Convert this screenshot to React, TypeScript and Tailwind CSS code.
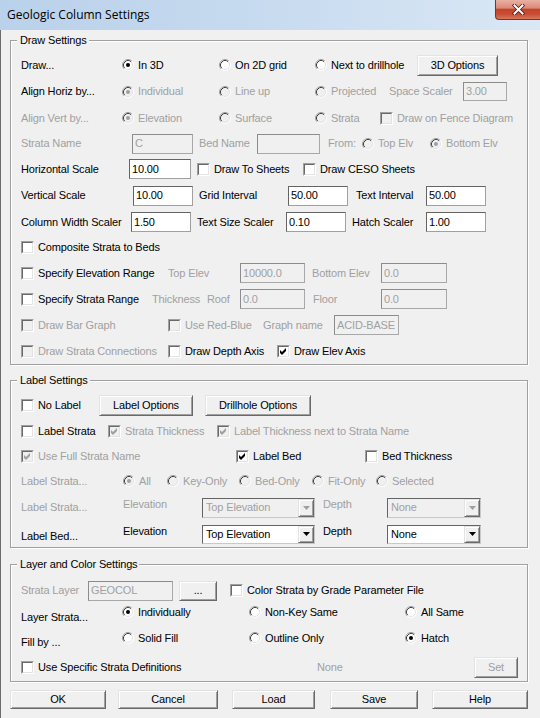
import React from 'react';

const DIS = 'text-[#a0a0a0]';

type P = { text?: string; dis?: boolean; checked?: boolean; cls?: string; value?: string };

function Label({ text, dis, cls = '' }: P) {
  return <span className={`shrink-0 whitespace-nowrap ${dis ? DIS : 'text-black'} ${cls}`}>{text}</span>;
}

function RadioGlyph({ checked, dis }: P) {
  return (
    <svg width="12" height="12" viewBox="0 0 12 12" className="shrink-0">
      <circle cx="6" cy="6" r="5.2" fill={dis ? '#f0f0f0' : '#ffffff'} />
      <path d="M2.11 9.89 A5.5 5.5 0 0 1 9.89 2.11" stroke="#a0a0a0" strokeWidth="1" fill="none" />
      <path d="M2.82 9.18 A4.5 4.5 0 0 1 9.18 2.82" stroke="#404040" strokeWidth="1" fill="none" />
      <path d="M9.89 2.11 A5.5 5.5 0 0 1 2.11 9.89" stroke="#ffffff" strokeWidth="1" fill="none" />
      <path d="M9.18 2.82 A4.5 4.5 0 0 1 2.82 9.18" stroke="#e3e3e3" strokeWidth="1" fill="none" />
      {checked && <circle cx="6" cy="6" r="2" fill={dis ? '#a0a0a0' : '#000000'} />}
    </svg>
  );
}

function Radio({ text, checked, dis, cls = '' }: P) {
  return (
    <div className={`flex items-center shrink-0 ${cls}`}>
      <RadioGlyph checked={checked} dis={dis} />
      <span className={`ml-[4px] whitespace-nowrap ${dis ? DIS : 'text-black'}`}>{text}</span>
    </div>
  );
}

function CheckGlyph({ checked, dis }: P) {
  return (
    <div className="w-[13px] h-[13px] shrink-0 border border-t-[#a0a0a0] border-l-[#a0a0a0] border-r-white border-b-white">
      <div
        className={`w-full h-full border border-t-[#696969] border-l-[#696969] border-r-[#e3e3e3] border-b-[#e3e3e3] flex items-center justify-center ${
          dis ? 'bg-[#f0f0f0]' : 'bg-white'
        }`}
      >
        {checked && (
          <svg width="7" height="7" viewBox="0 0 7 7">
            <path d="M0 2 L2 4 L6 0 L6 3 L2 7 L0 5 Z" fill={dis ? '#a0a0a0' : '#000000'} />
          </svg>
        )}
      </div>
    </div>
  );
}

function Check({ text, checked, dis, cls = '' }: P) {
  return (
    <div className={`flex items-center shrink-0 ${cls}`}>
      <CheckGlyph checked={checked} dis={dis} />
      <span className={`ml-[4px] whitespace-nowrap ${dis ? DIS : 'text-black'}`}>{text}</span>
    </div>
  );
}

function TextBox({ value, dis, cls = '' }: P) {
  return (
    <div
      className={`shrink-0 flex items-center pl-[2px] overflow-hidden whitespace-nowrap border ${
        dis
          ? 'bg-[#f0f0f0] text-[#a0a0a0] border-[#a8a8a8] border-t-[#8c8c8c] border-l-[#8c8c8c]'
          : 'bg-white text-black border-[#a0a0a0] border-t-[#646464] border-l-[#646464]'
      } ${cls}`}
    >
      {value}
    </div>
  );
}

function Btn({ text, dis, cls = '' }: P) {
  return (
    <div
      className={`shrink-0 flex items-center justify-center whitespace-nowrap bg-[#f0f0f0] border border-t-[#e3e3e3] border-l-[#e3e3e3] border-r-[#696969] border-b-[#696969] shadow-[inset_1px_1px_0_#ffffff,inset_-1px_-1px_0_#a0a0a0] ${
        dis ? DIS : 'text-black'
      } ${cls}`}
    >
      {text}
    </div>
  );
}

function Combo({ value, dis, cls = '' }: P) {
  return (
    <div
      className={`shrink-0 flex border border-t-[#646464] border-l-[#646464] border-r-[#c8c8c8] border-b-[#c8c8c8] ${
        dis ? 'bg-[#f0f0f0]' : 'bg-white'
      } ${cls}`}
    >
      <div className={`flex-1 flex items-center pl-[3px] whitespace-nowrap ${dis ? DIS : 'text-black'}`}>{value}</div>
      <div className="w-[16px] h-full flex items-center justify-center bg-[#f0f0f0] border border-t-[#e3e3e3] border-l-[#e3e3e3] border-r-[#696969] border-b-[#696969] shadow-[inset_1px_1px_0_#ffffff,inset_-1px_-1px_0_#a0a0a0]">
        <svg width="7" height="4" viewBox="0 0 7 4">
          <path d="M0 0 H7 L3.5 4 Z" fill={dis ? '#a0a0a0' : '#000000'} />
        </svg>
      </div>
    </div>
  );
}

function Group({ title, children, cls = '' }: { title: string; children: React.ReactNode; cls?: string }) {
  return (
    <div className={`relative w-[518px] border border-[#a0a0a0] shadow-[inset_1px_1px_0_#ffffff,1px_1px_0_#ffffff] ${cls}`}>
      <span className="absolute left-[6px] top-[-7px] bg-[#f0f0f0] pl-[3px] pr-[2px] leading-[13px] whitespace-nowrap">{title}</span>
      {children}
    </div>
  );
}

function Row({ cls = '', children }: { cls?: string; children: React.ReactNode }) {
  return <div className={`flex items-center pl-[10px] ${cls}`}>{children}</div>;
}

export default function App() {
  return (
    <div className="w-[540px] h-[718px] flex flex-col overflow-hidden bg-[#f0f0f0] text-[11px] leading-[13px] tracking-[-0.15px] font-['Liberation_Sans',Arial,sans-serif]">
      {/* Title bar */}
      <div className="h-[30px] shrink-0 flex items-start bg-[linear-gradient(to_right,#b9d1ea,#c9dcf0_55%,#dae8f5)]">
        <span className="ml-[7px] mt-[8px] text-[12px] leading-[14px] tracking-normal text-black font-['Open_Sans',Arial,sans-serif]">
          Geologic Column Settings
        </span>
        <div className="ml-auto w-[45px] h-[20px] rounded-bl-[4px] border border-t-0 border-r-0 border-[#7a3328] bg-[linear-gradient(to_bottom,#eab0a2_0%,#dc8a78_42%,#c6432b_50%,#c84e35_75%,#d9765c_100%)] flex items-center justify-center">
          <svg width="13" height="11" viewBox="0 0 13 11">
            <path d="M2.5 1.5 L10.5 9.5 M10.5 1.5 L2.5 9.5" stroke="#4a1a12" strokeWidth="3.6" strokeLinecap="square" />
            <path d="M2.5 1.5 L10.5 9.5 M10.5 1.5 L2.5 9.5" stroke="#ffffff" strokeWidth="2" strokeLinecap="square" />
          </svg>
        </div>
      </div>

      {/* Body */}
      <div className="flex-1 flex flex-col border-l border-[#6b6b6b] pl-[9px] pt-[10px]">
        {/* Draw Settings */}
        <Group title="Draw Settings" cls="pt-[11px]">
          <Row cls="h-[26px]">
            <Label text="Draw..." cls="w-[101px]" />
            <Radio text="In 3D" checked cls="w-[97px]" />
            <Radio text="On 2D grid" cls="w-[96px]" />
            <Radio text="Next to drillhole" cls="w-[102px]" />
            <Btn text="3D Options" cls="w-[81px] h-[21px]" />
          </Row>
          <Row cls="h-[27px]">
            <Label text="Align Horiz by..." cls="w-[101px]" />
            <Radio text="Individual" checked dis cls="w-[97px]" />
            <Radio text="Line up" dis cls="w-[96px]" />
            <Radio text="Projected" dis cls="w-[74px]" />
            <Label text="Space Scaler" dis cls="w-[74px]" />
            <TextBox value="3.00" dis cls="w-[44px] h-[19px]" />
          </Row>
          <Row cls="h-[26px]">
            <Label text="Align Vert by..." dis cls="w-[101px]" />
            <Radio text="Elevation" checked dis cls="w-[97px]" />
            <Radio text="Surface" dis cls="w-[96px]" />
            <Radio text="Strata" dis cls="w-[65px]" />
            <Check text="Draw on Fence Diagram" dis />
          </Row>
          <Row cls="h-[25px]">
            <Label text="Strata Name" dis cls="w-[111px]" />
            <TextBox value="C" dis cls="w-[61px] h-[20px] mr-[6px]" />
            <Label text="Bed Name" dis cls="w-[58px]" />
            <TextBox value="" dis cls="w-[63px] h-[20px] mr-[8px]" />
            <Label text="From:" dis cls="w-[34px]" />
            <Radio text="Top Elv" dis cls="w-[68px]" />
            <Radio text="Bottom Elv" checked dis />
          </Row>
          <Row cls="h-[26px]">
            <Label text="Horizontal Scale" cls="w-[108px]" />
            <TextBox value="10.00" cls="w-[62px] h-[20px] mr-[6px]" />
            <Check text="Draw To Sheets" cls="w-[106px]" />
            <Check text="Draw CESO Sheets" />
          </Row>
          <Row cls="h-[27px]">
            <Label text="Vertical Scale" cls="w-[112px]" />
            <TextBox value="10.00" cls="w-[60px] h-[20px] mr-[6px]" />
            <Label text="Grid Interval" cls="w-[89px]" />
            <TextBox value="50.00" cls="w-[60px] h-[20px] mr-[8px]" />
            <Label text="Text Interval" cls="w-[70px]" />
            <TextBox value="50.00" cls="w-[60px] h-[20px]" />
          </Row>
          <Row cls="h-[26px]">
            <Label text="Column Width Scaler" cls="w-[110px]" />
            <TextBox value="1.50" cls="w-[60px] h-[20px] mr-[6px]" />
            <Label text="Text Size Scaler" cls="w-[89px]" />
            <TextBox value="0.10" cls="w-[60px] h-[20px] mr-[6px]" />
            <Label text="Hatch Scaler" cls="w-[74px]" />
            <TextBox value="1.00" cls="w-[60px] h-[20px]" />
          </Row>
          <Row cls="h-[25px]">
            <Check text="Composite Strata to Beds" />
          </Row>
          <Row cls="h-[26px]">
            <Check text="Specify Elevation Range" cls="w-[147px]" />
            <Label text="Top Elev" dis cls="w-[72px]" />
            <TextBox value="10000.0" dis cls="w-[65px] h-[20px] mr-[7px]" />
            <Label text="Bottom Elev" dis cls="w-[69px]" />
            <TextBox value="0.0" dis cls="w-[66px] h-[20px]" />
          </Row>
          <Row cls="h-[26px]">
            <Check text="Specify Strata Range" cls="w-[131px]" />
            <Label text="Thickness" dis cls="w-[55px]" />
            <Label text="Roof" dis cls="w-[33px]" />
            <TextBox value="0.0" dis cls="w-[65px] h-[20px] mr-[8px]" />
            <Label text="Floor" dis cls="w-[68px]" />
            <TextBox value="0.0" dis cls="w-[66px] h-[20px]" />
          </Row>
          <Row cls="h-[26px]">
            <Check text="Draw Bar Graph" dis cls="w-[147px]" />
            <Check text="Use Red-Blue" dis cls="w-[95px]" />
            <Label text="Graph name" dis cls="w-[71px]" />
            <TextBox value="ACID-BASE" dis cls="w-[65px] h-[20px]" />
          </Row>
          <Row cls="h-[26px]">
            <Check text="Draw Strata Connections" dis cls="w-[147px]" />
            <Check text="Draw Depth Axis" cls="w-[109px]" />
            <Check text="Draw Elev Axis" checked />
          </Row>
        </Group>

        {/* Label Settings */}
        <Group title="Label Settings" cls="mt-[15px] pt-[11px]">
          <Row cls="h-[26px]">
            <Check text="No Label" cls="w-[78px]" />
            <Btn text="Label Options" cls="w-[94px] h-[21px] mr-[12px]" />
            <Btn text="Drillhole Options" cls="w-[106px] h-[21px]" />
          </Row>
          <Row cls="h-[26px]">
            <Check text="Label Strata" cls="w-[87px]" />
            <Check text="Strata Thickness" checked dis cls="w-[109px]" />
            <Check text="Label Thickness next to Strata Name" checked dis />
          </Row>
          <Row cls="h-[24px]">
            <Check text="Use Full Strata Name" checked dis cls="w-[215px]" />
            <Check text="Label Bed" checked cls="w-[129px]" />
            <Check text="Bed Thickness" />
          </Row>
          <Row cls="h-[26px]">
            <Label text="Label Strata..." dis cls="w-[102px]" />
            <Radio text="All" checked dis cls="w-[44px]" />
            <Radio text="Key-Only" dis cls="w-[72px]" />
            <Radio text="Bed-Only" dis cls="w-[73px]" />
            <Radio text="Fit-Only" dis cls="w-[64px]" />
            <Radio text="Selected" dis />
          </Row>
          <Row cls="h-[27px]">
            <Label text="Label Strata..." dis cls="w-[102px]" />
            <Label text="Elevation" dis cls="w-[79px] mb-[6px]" />
            <Combo value="Top Elevation" dis cls="w-[113px] h-[20px] mr-[8px]" />
            <Label text="Depth" dis cls="w-[64px] mb-[6px]" />
            <Combo value="None" dis cls="w-[94px] h-[20px]" />
          </Row>
          <Row cls="h-[26px]">
            <Label text="Label Bed..." cls="w-[102px] mt-[4px]" />
            <Label text="Elevation" cls="w-[79px] mb-[6px]" />
            <Combo value="Top Elevation" cls="w-[113px] h-[19px] mr-[8px]" />
            <Label text="Depth" cls="w-[64px] mb-[6px]" />
            <Combo value="None" cls="w-[94px] h-[19px]" />
          </Row>
        </Group>

        {/* Layer and Color Settings */}
        <Group title="Layer and Color Settings" cls="mt-[16px] pt-[13px] pb-[1px]">
          <Row cls="h-[25px]">
            <Label text="Strata Layer" dis cls="w-[67px]" />
            <TextBox value="GEOCOL" dis cls="w-[85px] h-[20px] mr-[6px]" />
            <Btn text="..." cls="w-[38px] h-[20px] mr-[13px]" />
            <Check text="Color Strata by Grade Parameter File" />
          </Row>
          <Row cls="h-[25px]">
            <Label text="Layer Strata..." cls="w-[101px] mt-[3px]" />
            <Radio text="Individually" checked cls="w-[127px] mb-[7px]" />
            <Radio text="Non-Key Same" cls="w-[156px] mb-[7px]" />
            <Radio text="All Same" cls="mb-[7px]" />
          </Row>
          <Row cls="h-[26px]">
            <Label text="Fill by ..." cls="w-[101px] mt-[2px]" />
            <Radio text="Solid Fill" cls="w-[127px] mb-[6px]" />
            <Radio text="Outline Only" cls="w-[156px] mb-[6px]" />
            <Radio text="Hatch" checked cls="mb-[6px]" />
          </Row>
          <Row cls="h-[26px]">
            <Check text="Use Specific Strata Definitions" cls="w-[296px]" />
            <Label text="None" dis cls="w-[157px]" />
            <Btn text="Set" dis cls="w-[44px] h-[21px]" />
          </Row>
        </Group>

        {/* Bottom buttons */}
        <div className="flex mt-[8px]">
          <Btn text="OK" cls="w-[96px] h-[19px]" />
          <Btn text="Cancel" cls="w-[100px] h-[19px] ml-[12px]" />
          <Btn text="Load" cls="w-[83px] h-[19px] ml-[14px]" />
          <Btn text="Save" cls="w-[88px] h-[19px] ml-[15px]" />
          <Btn text="Help" cls="w-[96px] h-[19px] ml-[14px]" />
        </div>
      </div>
    </div>
  );
}
